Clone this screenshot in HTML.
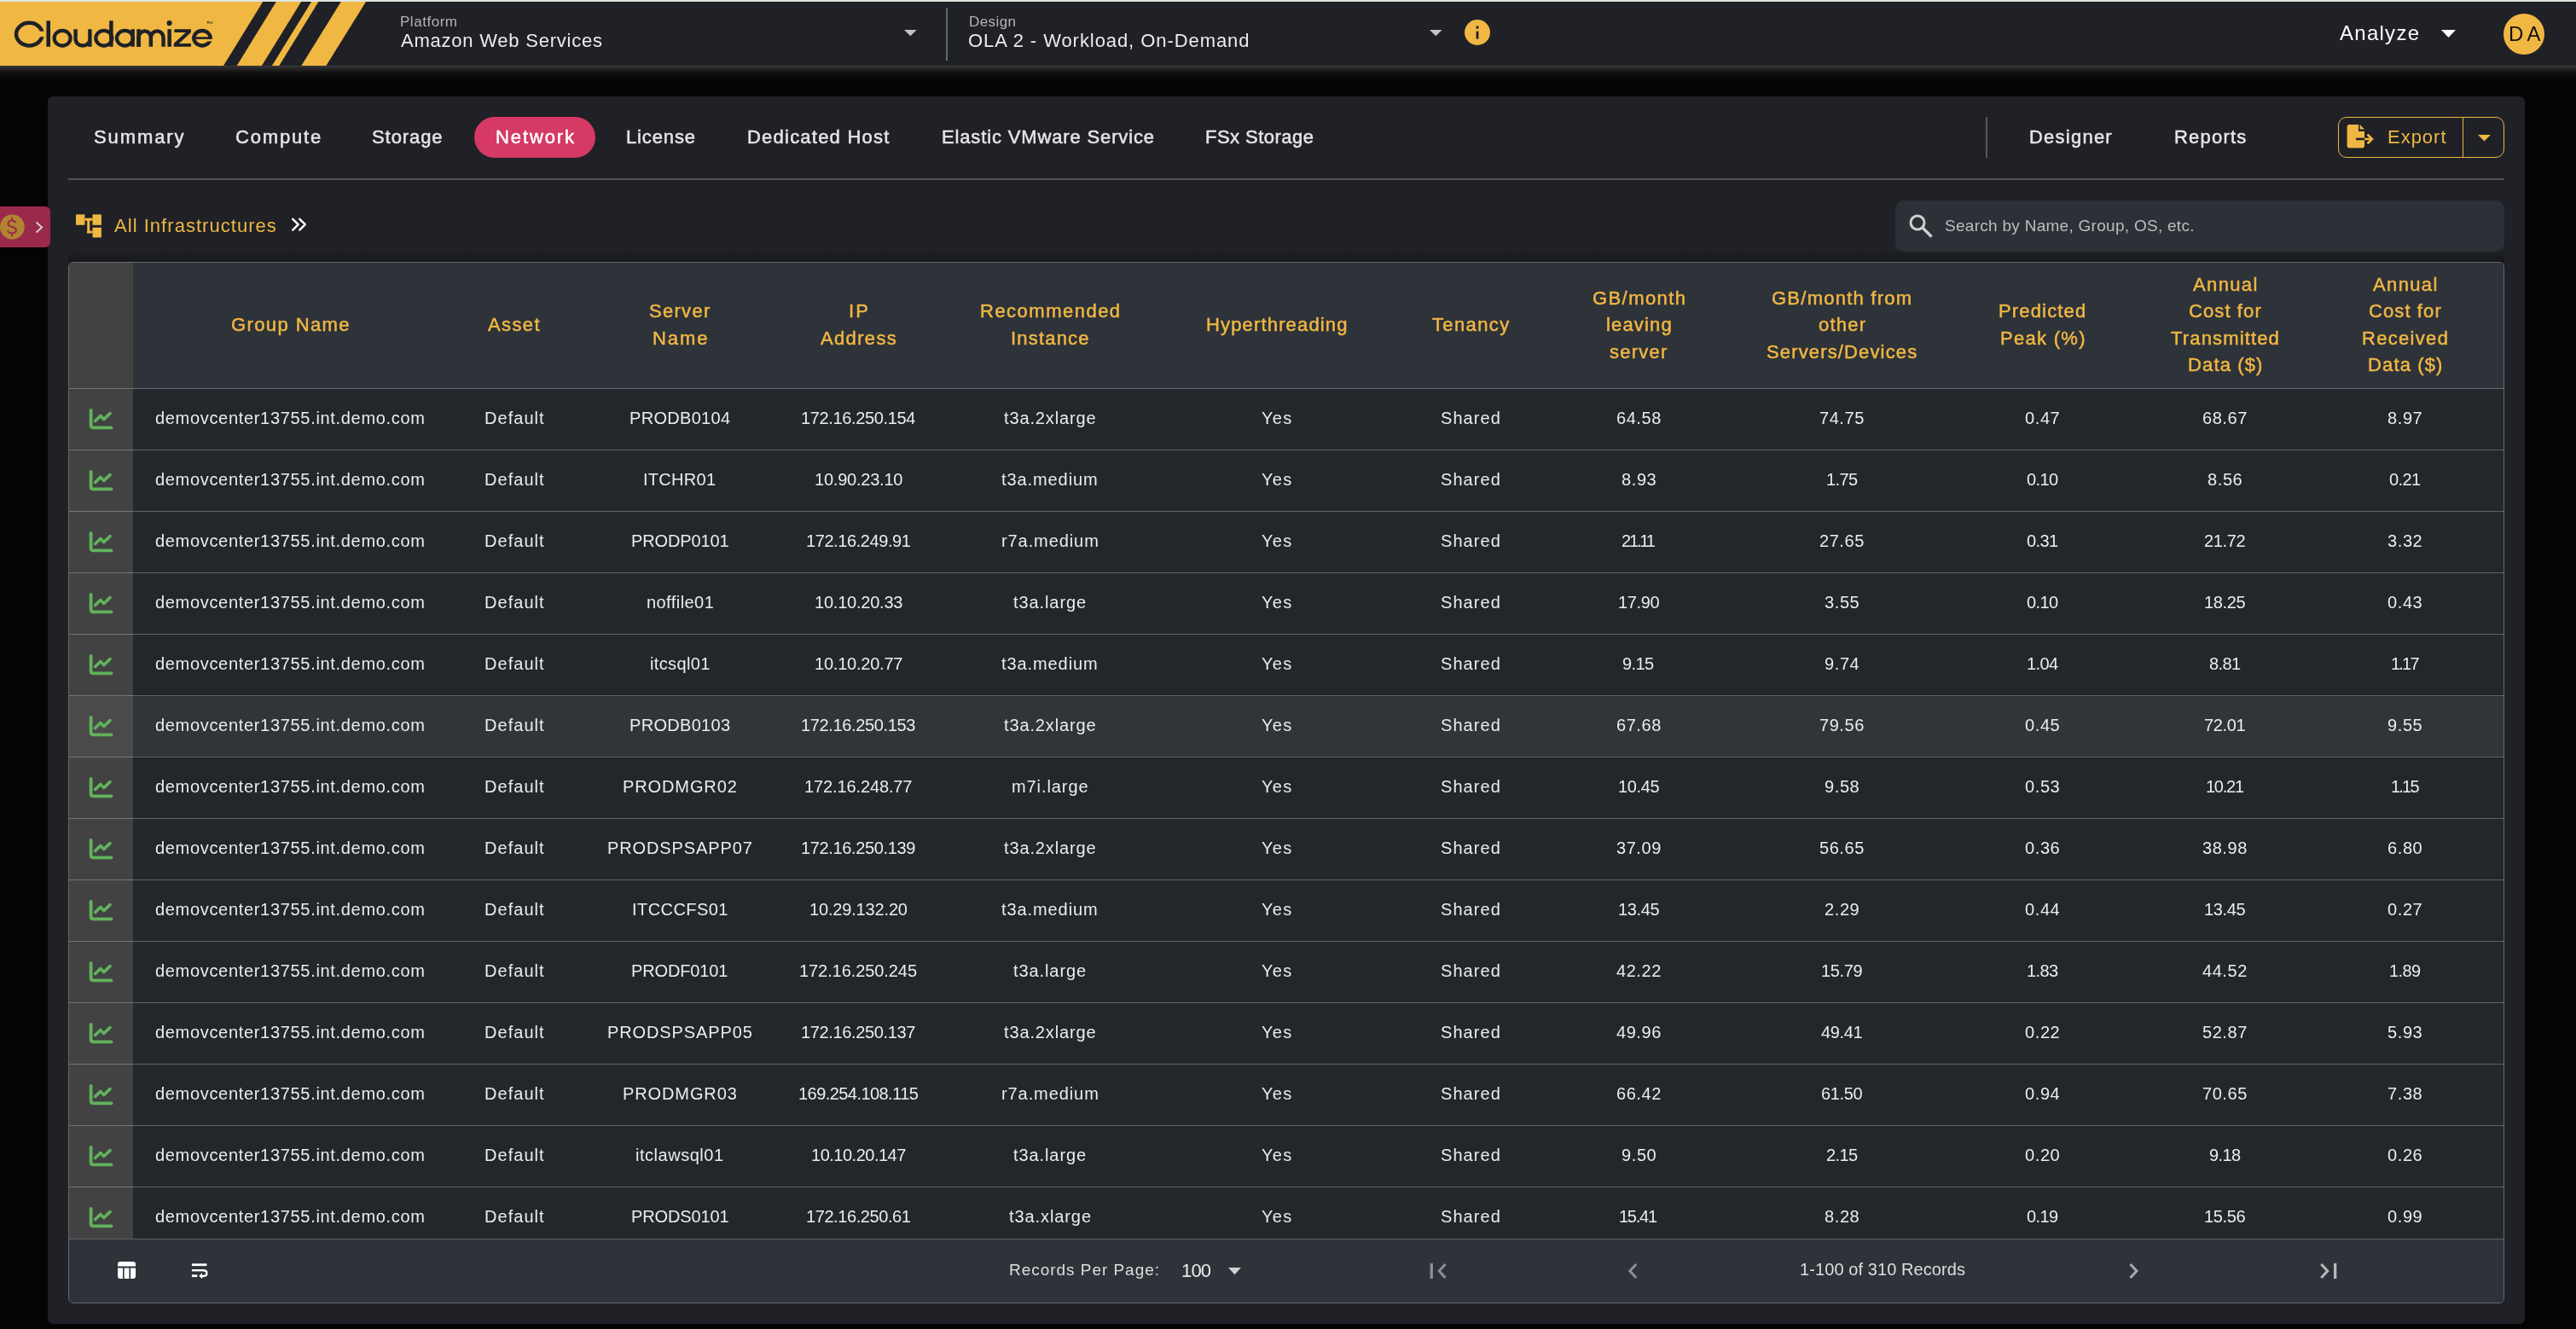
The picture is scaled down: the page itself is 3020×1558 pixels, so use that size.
<!DOCTYPE html>
<html><head><meta charset="utf-8"><title>Cloudamize - Network</title>
<style>
html,body{margin:0;padding:0;}
body{width:3020px;height:1558px;overflow:hidden;background:#040404;position:relative;font-family:"Liberation Sans",sans-serif;}
.t{position:absolute;white-space:nowrap;will-change:transform;}
.r{position:absolute;}
svg{position:absolute;overflow:visible;}
</style></head><body>

<div class="r" style="left:0;top:0;width:3020px;height:2px;background:#e0e4de"></div>
<div class="r" style="left:0;top:2px;width:3020px;height:75px;background:#1f2126"></div>
<div class="r" style="left:0;top:77px;width:3020px;height:16px;background:linear-gradient(#3c3c3c,#2a2a2a 15%,#111 50%,#060606 100%)"></div>
<div class="r" style="left:0;top:93px;width:3020px;height:20px;background:#040404"></div>
<svg style="left:0;top:0" width="440" height="80"><g fill="#f0b743"><polygon points="0,2 308.2,2 262,77 0,77"/><polygon points="323.8,2 353.1,2 306.9,77 277.7,77"/><polygon points="365.1,2 373.4,2 327.3,77 318.9,77"/><polygon points="399.8,2 429,2 382.4,77 353.3,77"/></g></svg>
<svg style="left:0;top:0" width="260" height="70"><g fill="none" stroke="#1e2126"><ellipse cx="34.35" cy="40.1" rx="15.35" ry="13.3" stroke-width="4.5"/><ellipse cx="73.1" cy="44.75" rx="9.5" ry="8.8" stroke-width="4.2"/><path d="M88.6,34.2 V46 A8.4,7.5 0 0 0 105.4,46 V34.2 M105.4,45 V54.8" stroke-width="4.4"/><ellipse cx="121.8" cy="44.75" rx="9.5" ry="8.8" stroke-width="4.2"/><ellipse cx="146.4" cy="44.75" rx="9.5" ry="8.8" stroke-width="4.2"/><path d="M162.55,54.8 V44 A7.15,7.6 0 0 1 176.85,44 V54.8 M176.85,44 A7.35,7.6 0 0 1 191.55,44 V54.8" stroke-width="4.4"/><ellipse cx="237" cy="44.75" rx="9.75" ry="8.75" stroke-width="4.3"/></g><g fill="#f0b743"><rect x="38" y="36.7" width="16" height="6.5"/><rect x="239" y="45.8" width="12" height="2.6"/></g><g fill="#1e2126"><rect x="54.4" y="24.3" width="4.6" height="30.5"/><rect x="128.1" y="24.3" width="4.5" height="30.5"/><rect x="153.5" y="34.2" width="4.3" height="20.6"/><rect x="160.3" y="34.2" width="4.5" height="20.6"/><rect x="196.4" y="34.2" width="4.5" height="20.6"/><circle cx="198.6" cy="27.1" r="3.1"/><polygon points="204.4,34.2 223.9,34.2 223.9,37.9 209.8,51 223.9,51 223.9,54.8 203.7,54.8 203.7,51.1 217.8,37.9 204.4,37.9"/><rect x="227.5" y="43.3" width="20" height="2.6"/><path d="M242.3,25.6 H245.2 M243.75,25.6 V27.9 M245.8,27.9 V25.6 L247.3,27.2 L248.8,25.6 V27.9" stroke="#1e2126" stroke-width="0.7" fill="none"/></g></svg>
<div class="t" style="top:17px;font-size:17px;line-height:17px;font-weight:400;color:#b4b4b4;letter-spacing:0.529px;left:469.00px;">Platform</div>
<div class="t" style="top:37px;font-size:22px;line-height:22px;font-weight:400;color:#ebebeb;letter-spacing:0.770px;left:470.00px;">Amazon Web Services</div>
<svg style="left:1059.6px;top:35px" width="16" height="9"><polygon points="0,0 14.6,0 7.3,7.2" fill="#c4c4c4"/></svg>
<div class="r" style="left:1109.2px;top:9px;width:1.7px;height:62px;background:#63686a"></div>
<div class="t" style="top:17px;font-size:17px;line-height:17px;font-weight:400;color:#b4b4b4;letter-spacing:0.416px;left:1136.00px;">Design</div>
<div class="t" style="top:37px;font-size:22px;line-height:22px;font-weight:400;color:#ebebeb;letter-spacing:0.931px;left:1134.50px;">OLA 2 - Workload, On-Demand</div>
<svg style="left:1675.6px;top:35px" width="16" height="9"><polygon points="0,0 14.6,0 7.3,7.2" fill="#c4c4c4"/></svg>
<svg style="left:1716.5px;top:23px" width="30" height="30"><circle cx="15" cy="15" r="15" fill="#f0b743"/><rect x="13.6" y="7.4" width="2.8" height="3.2" fill="#1f2126"/><rect x="13.6" y="13.7" width="2.8" height="8.9" fill="#1f2126"/></svg>
<div class="t" style="top:27px;font-size:24px;line-height:24px;font-weight:400;color:#ffffff;letter-spacing:1.269px;left:2743.00px;">Analyze</div>
<svg style="left:2862px;top:34.5px" width="18" height="10"><polygon points="0,0 17,0 8.5,9" fill="#ffffff"/></svg>
<svg style="left:2935px;top:16px" width="48" height="48"><circle cx="24" cy="24" r="24" fill="#f0b743"/></svg>
<div class="t" style="top:28px;font-size:24px;line-height:24px;font-weight:400;color:#111111;letter-spacing:4.159px;left:2940.85px;">DA</div>
<div class="r" style="left:56px;top:113px;width:2904px;height:1439px;background:#1f2126;border-radius:6px"></div>
<div class="r" style="left:556px;top:137px;width:142px;height:48px;background:#d63964;border-radius:24px"></div>
<div class="t" style="top:150px;font-size:22px;line-height:22px;font-weight:400;color:#e6e6e6;-webkit-text-stroke:0.5px #e6e6e6;letter-spacing:1.895px;left:110.00px;">Summary</div>
<div class="t" style="top:150px;font-size:22px;line-height:22px;font-weight:400;color:#e6e6e6;-webkit-text-stroke:0.5px #e6e6e6;letter-spacing:1.822px;left:275.70px;">Compute</div>
<div class="t" style="top:150px;font-size:22px;line-height:22px;font-weight:400;color:#e6e6e6;-webkit-text-stroke:0.5px #e6e6e6;letter-spacing:0.924px;left:436.40px;">Storage</div>
<div class="t" style="top:150px;font-size:22px;line-height:22px;font-weight:400;color:#ffffff;-webkit-text-stroke:0.5px #ffffff;letter-spacing:1.886px;left:581.00px;">Network</div>
<div class="t" style="top:150px;font-size:22px;line-height:22px;font-weight:400;color:#e6e6e6;-webkit-text-stroke:0.5px #e6e6e6;letter-spacing:0.861px;left:734.00px;">License</div>
<div class="t" style="top:150px;font-size:22px;line-height:22px;font-weight:400;color:#e6e6e6;-webkit-text-stroke:0.5px #e6e6e6;letter-spacing:1.222px;left:875.70px;">Dedicated Host</div>
<div class="t" style="top:150px;font-size:22px;line-height:22px;font-weight:400;color:#e6e6e6;-webkit-text-stroke:0.5px #e6e6e6;letter-spacing:0.854px;left:1103.70px;">Elastic VMware Service</div>
<div class="t" style="top:150px;font-size:22px;line-height:22px;font-weight:400;color:#e6e6e6;-webkit-text-stroke:0.5px #e6e6e6;letter-spacing:0.472px;left:1413.00px;">FSx Storage</div>
<div class="r" style="left:2328px;top:137px;width:2px;height:48px;background:#55575b"></div>
<div class="t" style="top:150px;font-size:22px;line-height:22px;font-weight:400;color:#e6e6e6;-webkit-text-stroke:0.5px #e6e6e6;letter-spacing:1.236px;left:2378.80px;">Designer</div>
<div class="t" style="top:150px;font-size:22px;line-height:22px;font-weight:400;color:#e6e6e6;-webkit-text-stroke:0.5px #e6e6e6;letter-spacing:1.211px;left:2548.70px;">Reports</div>
<div class="r" style="left:2741px;top:137px;width:193px;height:46px;border:1.3px solid #f0b743;border-radius:10px"></div>
<div class="r" style="left:2887px;top:137px;width:1.3px;height:48px;background:#f0b743"></div>
<svg style="left:2751px;top:145px" width="34" height="30"><path d="M3,1 H14 V9 H21 V26 Q21,28.5 18.5,28.5 H3 Q0.6,28.5 0.6,26 V3.5 Q0.6,1 3,1 Z" fill="#f0b743"/><path d="M15.5,1 L21,6.5 H15.5 Z" fill="#f0b743"/><path d="M11,18 H30" stroke="#1f2126" stroke-width="2.6" fill="none"/><path d="M21,18 H30 M24.5,12.6 L30,18 L24.5,23.4" stroke="#f0b743" stroke-width="2.6" fill="none"/></svg>
<div class="t" style="top:150px;font-size:22px;line-height:22px;font-weight:400;color:#f0b743;letter-spacing:0.983px;left:2798.60px;">Export</div>
<svg style="left:2904.5px;top:158px" width="16" height="8"><polygon points="0,0 15,0 7.5,7.5" fill="#f0b743"/></svg>
<div class="r" style="left:80px;top:209px;width:2856px;height:2px;background:#505256"></div>
<div class="r" style="left:0;top:242px;width:59px;height:48px;background:#9b294c;border-radius:0 6px 6px 0"></div>
<svg style="left:0;top:251px" width="60" height="32"><circle cx="14.4" cy="15" r="14.4" fill="#b08433"/><path d="M18.2,9.5 Q16.5,7.6 14,7.6 Q9.6,7.6 9.6,11.3 Q9.6,14.2 14,15 Q18.8,15.8 18.8,19 Q18.8,22.4 14,22.4 Q11,22.4 9.2,20.3 M14,4.6 V7.6 M14,22.4 V25.4" stroke="#9b294c" stroke-width="2" fill="none" stroke-linecap="round"/><path d="M42.5,9.5 L49,15.5 L42.5,21.5" stroke="#cfcfcf" stroke-width="2" fill="none"/></svg>
<svg style="left:89px;top:251px" width="32" height="30"><g fill="#f0b743"><rect x="0" y="0.4" width="10.4" height="12.4"/><rect x="19.5" y="0.4" width="10.4" height="12.4"/><rect x="19.5" y="15.8" width="10.4" height="11.6"/><rect x="10.4" y="4.7" width="9.1" height="3"/><rect x="13.2" y="7" width="3" height="15.4"/><rect x="13.2" y="19.6" width="6.3" height="2.8"/></g></svg>
<div class="t" style="top:254px;font-size:22px;line-height:22px;font-weight:400;color:#f0b743;letter-spacing:1.035px;left:134.00px;">All Infrastructures</div>
<svg style="left:340px;top:254px" width="22" height="20"><path d="M3.2,2.8 L9.7,9.2 L3.2,15.6 M11.3,2.8 L17.8,9.2 L11.3,15.6" stroke="#fff" stroke-width="2.4" fill="none" stroke-linecap="round" stroke-linejoin="round"/></svg>
<div class="r" style="left:2222px;top:235px;width:2714px;height:60px;background:#2d3037;border-radius:10px;width:714px"></div>
<svg style="left:2237px;top:249.5px" width="32" height="32"><circle cx="11" cy="11" r="8" stroke="#cfcfcf" stroke-width="3" fill="none"/><path d="M17,17 L27.5,27.5" stroke="#cfcfcf" stroke-width="3.4"/></svg>
<div class="t" style="top:255px;font-size:19px;line-height:19px;font-weight:400;color:#bdbdbd;letter-spacing:0.281px;left:2279.50px;">Search by Name, Group, OS, etc.</div>
<div class="r" style="left:80px;top:293px;width:2856px;height:14px;background:linear-gradient(rgba(0,0,0,0),rgba(0,0,0,0.28))"></div>
<div class="r" style="left:80px;top:307px;width:2856px;height:1221px;background:#23262b;border-radius:6px;overflow:hidden;box-sizing:border-box;border:1px solid #66686c">
<div class="r" style="left:0;top:0;width:100%;height:148px;background:#2e3239"></div>
<div class="r" style="left:0;top:0;width:75px;height:1144px;background:#424242"></div>
<div class="r" style="left:0;top:508px;width:100%;height:71px;background:#313439"></div>
<div class="r" style="left:0;top:508px;width:75px;height:71px;background:#4a4a4a"></div>
<div class="r" style="left:0;top:147px;width:100%;height:1px;background:rgba(255,255,255,0.28)"></div>
<div class="r" style="left:0;top:219px;width:100%;height:1px;background:rgba(255,255,255,0.28)"></div>
<div class="r" style="left:0;top:291px;width:100%;height:1px;background:rgba(255,255,255,0.28)"></div>
<div class="r" style="left:0;top:363px;width:100%;height:1px;background:rgba(255,255,255,0.28)"></div>
<div class="r" style="left:0;top:435px;width:100%;height:1px;background:rgba(255,255,255,0.28)"></div>
<div class="r" style="left:0;top:507px;width:100%;height:1px;background:rgba(255,255,255,0.28)"></div>
<div class="r" style="left:0;top:579px;width:100%;height:1px;background:rgba(255,255,255,0.28)"></div>
<div class="r" style="left:0;top:651px;width:100%;height:1px;background:rgba(255,255,255,0.28)"></div>
<div class="r" style="left:0;top:723px;width:100%;height:1px;background:rgba(255,255,255,0.28)"></div>
<div class="r" style="left:0;top:795px;width:100%;height:1px;background:rgba(255,255,255,0.28)"></div>
<div class="r" style="left:0;top:867px;width:100%;height:1px;background:rgba(255,255,255,0.28)"></div>
<div class="r" style="left:0;top:939px;width:100%;height:1px;background:rgba(255,255,255,0.28)"></div>
<div class="r" style="left:0;top:1011px;width:100%;height:1px;background:rgba(255,255,255,0.28)"></div>
<div class="r" style="left:0;top:1083px;width:100%;height:1px;background:rgba(255,255,255,0.28)"></div>
<div class="r" style="left:0;top:1144px;width:100%;height:76px;background:#2e3239;border-top:1px solid #606166"></div>
</div>
<div class="t" style="top:370px;font-size:22px;line-height:22px;font-weight:400;color:#f0b743;-webkit-text-stroke:0.5px #f0b743;letter-spacing:1.399px;left:271.13px;">Group Name</div>
<div class="t" style="top:370px;font-size:22px;line-height:22px;font-weight:400;color:#f0b743;-webkit-text-stroke:0.5px #f0b743;letter-spacing:1.376px;left:572.34px;">Asset</div>
<div class="t" style="top:354px;font-size:22px;line-height:22px;font-weight:400;color:#f0b743;-webkit-text-stroke:0.5px #f0b743;letter-spacing:1.296px;left:761.36px;">Server</div>
<div class="t" style="top:386px;font-size:22px;line-height:22px;font-weight:400;color:#f0b743;-webkit-text-stroke:0.5px #f0b743;letter-spacing:1.956px;left:764.72px;">Name</div>
<div class="t" style="top:354px;font-size:22px;line-height:22px;font-weight:400;color:#f0b743;-webkit-text-stroke:0.5px #f0b743;letter-spacing:2.079px;left:995.07px;">IP</div>
<div class="t" style="top:386px;font-size:22px;line-height:22px;font-weight:400;color:#f0b743;-webkit-text-stroke:0.5px #f0b743;letter-spacing:1.345px;left:962.11px;">Address</div>
<div class="t" style="top:354px;font-size:22px;line-height:22px;font-weight:400;color:#f0b743;-webkit-text-stroke:0.5px #f0b743;letter-spacing:1.492px;left:1148.74px;">Recommended</div>
<div class="t" style="top:386px;font-size:22px;line-height:22px;font-weight:400;color:#f0b743;-webkit-text-stroke:0.5px #f0b743;letter-spacing:1.188px;left:1185.06px;">Instance</div>
<div class="t" style="top:370px;font-size:22px;line-height:22px;font-weight:400;color:#f0b743;-webkit-text-stroke:0.5px #f0b743;letter-spacing:1.157px;left:1414.26px;">Hyperthreading</div>
<div class="t" style="top:370px;font-size:22px;line-height:22px;font-weight:400;color:#f0b743;-webkit-text-stroke:0.5px #f0b743;letter-spacing:1.366px;left:1679.33px;">Tenancy</div>
<div class="t" style="top:339px;font-size:22px;line-height:22px;font-weight:400;color:#f0b743;-webkit-text-stroke:0.5px #f0b743;letter-spacing:1.415px;left:1866.53px;">GB/month</div>
<div class="t" style="top:370px;font-size:22px;line-height:22px;font-weight:400;color:#f0b743;-webkit-text-stroke:0.5px #f0b743;letter-spacing:1.162px;left:1882.65px;">leaving</div>
<div class="t" style="top:402px;font-size:22px;line-height:22px;font-weight:400;color:#f0b743;-webkit-text-stroke:0.5px #f0b743;letter-spacing:1.223px;left:1887.38px;">server</div>
<div class="t" style="top:339px;font-size:22px;line-height:22px;font-weight:400;color:#f0b743;-webkit-text-stroke:0.5px #f0b743;letter-spacing:1.243px;left:2077.36px;">GB/month from</div>
<div class="t" style="top:370px;font-size:22px;line-height:22px;font-weight:400;color:#f0b743;-webkit-text-stroke:0.5px #f0b743;letter-spacing:1.254px;left:2131.82px;">other</div>
<div class="t" style="top:402px;font-size:22px;line-height:22px;font-weight:400;color:#f0b743;-webkit-text-stroke:0.5px #f0b743;letter-spacing:1.144px;left:2071.31px;">Servers/Devices</div>
<div class="t" style="top:354px;font-size:22px;line-height:22px;font-weight:400;color:#f0b743;-webkit-text-stroke:0.5px #f0b743;letter-spacing:1.162px;left:2343.18px;">Predicted</div>
<div class="t" style="top:386px;font-size:22px;line-height:22px;font-weight:400;color:#f0b743;-webkit-text-stroke:0.5px #f0b743;letter-spacing:1.292px;left:2344.54px;">Peak (%)</div>
<div class="t" style="top:323px;font-size:22px;line-height:22px;font-weight:400;color:#f0b743;-webkit-text-stroke:0.5px #f0b743;letter-spacing:1.370px;left:2570.82px;">Annual</div>
<div class="t" style="top:354px;font-size:22px;line-height:22px;font-weight:400;color:#f0b743;-webkit-text-stroke:0.5px #f0b743;letter-spacing:1.100px;left:2566.14px;">Cost for</div>
<div class="t" style="top:386px;font-size:22px;line-height:22px;font-weight:400;color:#f0b743;-webkit-text-stroke:0.5px #f0b743;letter-spacing:1.153px;left:2545.07px;">Transmitted</div>
<div class="t" style="top:417px;font-size:22px;line-height:22px;font-weight:400;color:#f0b743;-webkit-text-stroke:0.5px #f0b743;letter-spacing:1.135px;left:2564.79px;">Data ($)</div>
<div class="t" style="top:323px;font-size:22px;line-height:22px;font-weight:400;color:#f0b743;-webkit-text-stroke:0.5px #f0b743;letter-spacing:1.370px;left:2781.82px;">Annual</div>
<div class="t" style="top:354px;font-size:22px;line-height:22px;font-weight:400;color:#f0b743;-webkit-text-stroke:0.5px #f0b743;letter-spacing:1.100px;left:2777.14px;">Cost for</div>
<div class="t" style="top:386px;font-size:22px;line-height:22px;font-weight:400;color:#f0b743;-webkit-text-stroke:0.5px #f0b743;letter-spacing:1.310px;left:2769.05px;">Received</div>
<div class="t" style="top:417px;font-size:22px;line-height:22px;font-weight:400;color:#f0b743;-webkit-text-stroke:0.5px #f0b743;letter-spacing:1.135px;left:2775.79px;">Data ($)</div>
<svg style="left:104px;top:479.4px" width="30" height="26"><path d="M2.6,2 V19.5 Q2.6,22.4 5.5,22.4 H26.5" stroke="#62b25c" stroke-width="3.8" fill="none" stroke-linecap="round"/><path d="M7.6,14.6 L13.8,8.4 L17.8,12.5 L25,5.6" stroke="#62b25c" stroke-width="3.6" fill="none" stroke-linecap="round" stroke-linejoin="round"/></svg>
<div class="t" style="top:480px;font-size:20px;line-height:20px;font-weight:400;color:#ececec;letter-spacing:0.682px;left:182.43px;">demovcenter13755.int.demo.com</div>
<div class="t" style="top:480px;font-size:20px;line-height:20px;font-weight:400;color:#ececec;letter-spacing:1.050px;left:567.76px;">Default</div>
<div class="t" style="top:480px;font-size:20px;line-height:20px;font-weight:400;color:#ececec;letter-spacing:0.312px;left:737.94px;">PRODB0104</div>
<div class="t" style="top:480px;font-size:20px;line-height:20px;font-weight:400;color:#ececec;letter-spacing:-0.354px;left:939.29px;">172.16.250.154</div>
<div class="t" style="top:480px;font-size:20px;line-height:20px;font-weight:400;color:#ececec;letter-spacing:0.860px;left:1177.02px;">t3a.2xlarge</div>
<div class="t" style="top:480px;font-size:20px;line-height:20px;font-weight:400;color:#ececec;letter-spacing:1.350px;left:1479.34px;">Yes</div>
<div class="t" style="top:480px;font-size:20px;line-height:20px;font-weight:400;color:#ececec;letter-spacing:1.080px;left:1689.45px;">Shared</div>
<div class="t" style="top:480px;font-size:20px;line-height:20px;font-weight:400;color:#ececec;letter-spacing:0.550px;left:1894.88px;">64.58</div>
<div class="t" style="top:480px;font-size:20px;line-height:20px;font-weight:400;color:#ececec;letter-spacing:0.550px;left:2133.28px;">74.75</div>
<div class="t" style="top:480px;font-size:20px;line-height:20px;font-weight:400;color:#ececec;letter-spacing:0.600px;left:2373.94px;">0.47</div>
<div class="t" style="top:480px;font-size:20px;line-height:20px;font-weight:400;color:#ececec;letter-spacing:0.550px;left:2582.38px;">68.67</div>
<div class="t" style="top:480px;font-size:20px;line-height:20px;font-weight:400;color:#ececec;letter-spacing:0.600px;left:2799.14px;">8.97</div>
<svg style="left:104px;top:551.4px" width="30" height="26"><path d="M2.6,2 V19.5 Q2.6,22.4 5.5,22.4 H26.5" stroke="#62b25c" stroke-width="3.8" fill="none" stroke-linecap="round"/><path d="M7.6,14.6 L13.8,8.4 L17.8,12.5 L25,5.6" stroke="#62b25c" stroke-width="3.6" fill="none" stroke-linecap="round" stroke-linejoin="round"/></svg>
<div class="t" style="top:552px;font-size:20px;line-height:20px;font-weight:400;color:#ececec;letter-spacing:0.682px;left:182.43px;">demovcenter13755.int.demo.com</div>
<div class="t" style="top:552px;font-size:20px;line-height:20px;font-weight:400;color:#ececec;letter-spacing:1.050px;left:567.76px;">Default</div>
<div class="t" style="top:552px;font-size:20px;line-height:20px;font-weight:400;color:#ececec;letter-spacing:0.283px;left:754.47px;">ITCHR01</div>
<div class="t" style="top:552px;font-size:20px;line-height:20px;font-weight:400;color:#ececec;letter-spacing:-0.220px;left:954.77px;">10.90.23.10</div>
<div class="t" style="top:552px;font-size:20px;line-height:20px;font-weight:400;color:#ececec;letter-spacing:0.911px;left:1174.45px;">t3a.medium</div>
<div class="t" style="top:552px;font-size:20px;line-height:20px;font-weight:400;color:#ececec;letter-spacing:1.350px;left:1479.34px;">Yes</div>
<div class="t" style="top:552px;font-size:20px;line-height:20px;font-weight:400;color:#ececec;letter-spacing:1.080px;left:1689.45px;">Shared</div>
<div class="t" style="top:552px;font-size:20px;line-height:20px;font-weight:400;color:#ececec;letter-spacing:0.600px;left:1900.64px;">8.93</div>
<div class="t" style="top:552px;font-size:20px;line-height:20px;font-weight:400;color:#ececec;letter-spacing:-0.600px;left:2140.84px;">1.75</div>
<div class="t" style="top:552px;font-size:20px;line-height:20px;font-weight:400;color:#ececec;letter-spacing:-0.600px;left:2375.74px;">0.10</div>
<div class="t" style="top:552px;font-size:20px;line-height:20px;font-weight:400;color:#ececec;letter-spacing:0.600px;left:2588.14px;">8.56</div>
<div class="t" style="top:552px;font-size:20px;line-height:20px;font-weight:400;color:#ececec;letter-spacing:-0.600px;left:2800.94px;">0.21</div>
<svg style="left:104px;top:623.4px" width="30" height="26"><path d="M2.6,2 V19.5 Q2.6,22.4 5.5,22.4 H26.5" stroke="#62b25c" stroke-width="3.8" fill="none" stroke-linecap="round"/><path d="M7.6,14.6 L13.8,8.4 L17.8,12.5 L25,5.6" stroke="#62b25c" stroke-width="3.6" fill="none" stroke-linecap="round" stroke-linejoin="round"/></svg>
<div class="t" style="top:624px;font-size:20px;line-height:20px;font-weight:400;color:#ececec;letter-spacing:0.682px;left:182.43px;">demovcenter13755.int.demo.com</div>
<div class="t" style="top:624px;font-size:20px;line-height:20px;font-weight:400;color:#ececec;letter-spacing:1.050px;left:567.76px;">Default</div>
<div class="t" style="top:624px;font-size:20px;line-height:20px;font-weight:400;color:#ececec;letter-spacing:-0.137px;left:739.74px;">PRODP0101</div>
<div class="t" style="top:624px;font-size:20px;line-height:20px;font-weight:400;color:#ececec;letter-spacing:-0.417px;left:945.05px;">172.16.249.91</div>
<div class="t" style="top:624px;font-size:20px;line-height:20px;font-weight:400;color:#ececec;letter-spacing:0.911px;left:1173.90px;">r7a.medium</div>
<div class="t" style="top:624px;font-size:20px;line-height:20px;font-weight:400;color:#ececec;letter-spacing:1.350px;left:1479.34px;">Yes</div>
<div class="t" style="top:624px;font-size:20px;line-height:20px;font-weight:400;color:#ececec;letter-spacing:1.080px;left:1689.45px;">Shared</div>
<div class="t" style="top:624px;font-size:20px;line-height:20px;font-weight:400;color:#ececec;letter-spacing:-2.150px;left:1901.02px;">21.11</div>
<div class="t" style="top:624px;font-size:20px;line-height:20px;font-weight:400;color:#ececec;letter-spacing:0.550px;left:2133.28px;">27.65</div>
<div class="t" style="top:624px;font-size:20px;line-height:20px;font-weight:400;color:#ececec;letter-spacing:-0.600px;left:2375.74px;">0.31</div>
<div class="t" style="top:624px;font-size:20px;line-height:20px;font-weight:400;color:#ececec;letter-spacing:-0.350px;left:2584.18px;">21.72</div>
<div class="t" style="top:624px;font-size:20px;line-height:20px;font-weight:400;color:#ececec;letter-spacing:0.600px;left:2799.14px;">3.32</div>
<svg style="left:104px;top:695.4px" width="30" height="26"><path d="M2.6,2 V19.5 Q2.6,22.4 5.5,22.4 H26.5" stroke="#62b25c" stroke-width="3.8" fill="none" stroke-linecap="round"/><path d="M7.6,14.6 L13.8,8.4 L17.8,12.5 L25,5.6" stroke="#62b25c" stroke-width="3.6" fill="none" stroke-linecap="round" stroke-linejoin="round"/></svg>
<div class="t" style="top:696px;font-size:20px;line-height:20px;font-weight:400;color:#ececec;letter-spacing:0.682px;left:182.43px;">demovcenter13755.int.demo.com</div>
<div class="t" style="top:696px;font-size:20px;line-height:20px;font-weight:400;color:#ececec;letter-spacing:1.050px;left:567.76px;">Default</div>
<div class="t" style="top:696px;font-size:20px;line-height:20px;font-weight:400;color:#ececec;letter-spacing:0.438px;left:757.62px;">noffile01</div>
<div class="t" style="top:696px;font-size:20px;line-height:20px;font-weight:400;color:#ececec;letter-spacing:-0.220px;left:954.77px;">10.10.20.33</div>
<div class="t" style="top:696px;font-size:20px;line-height:20px;font-weight:400;color:#ececec;letter-spacing:0.912px;left:1188.23px;">t3a.large</div>
<div class="t" style="top:696px;font-size:20px;line-height:20px;font-weight:400;color:#ececec;letter-spacing:1.350px;left:1479.34px;">Yes</div>
<div class="t" style="top:696px;font-size:20px;line-height:20px;font-weight:400;color:#ececec;letter-spacing:1.080px;left:1689.45px;">Shared</div>
<div class="t" style="top:696px;font-size:20px;line-height:20px;font-weight:400;color:#ececec;letter-spacing:-0.350px;left:1896.67px;">17.90</div>
<div class="t" style="top:696px;font-size:20px;line-height:20px;font-weight:400;color:#ececec;letter-spacing:0.600px;left:2139.04px;">3.55</div>
<div class="t" style="top:696px;font-size:20px;line-height:20px;font-weight:400;color:#ececec;letter-spacing:-0.600px;left:2375.74px;">0.10</div>
<div class="t" style="top:696px;font-size:20px;line-height:20px;font-weight:400;color:#ececec;letter-spacing:-0.350px;left:2584.18px;">18.25</div>
<div class="t" style="top:696px;font-size:20px;line-height:20px;font-weight:400;color:#ececec;letter-spacing:0.600px;left:2799.14px;">0.43</div>
<svg style="left:104px;top:767.4px" width="30" height="26"><path d="M2.6,2 V19.5 Q2.6,22.4 5.5,22.4 H26.5" stroke="#62b25c" stroke-width="3.8" fill="none" stroke-linecap="round"/><path d="M7.6,14.6 L13.8,8.4 L17.8,12.5 L25,5.6" stroke="#62b25c" stroke-width="3.6" fill="none" stroke-linecap="round" stroke-linejoin="round"/></svg>
<div class="t" style="top:768px;font-size:20px;line-height:20px;font-weight:400;color:#ececec;letter-spacing:0.682px;left:182.43px;">demovcenter13755.int.demo.com</div>
<div class="t" style="top:768px;font-size:20px;line-height:20px;font-weight:400;color:#ececec;letter-spacing:1.050px;left:567.76px;">Default</div>
<div class="t" style="top:768px;font-size:20px;line-height:20px;font-weight:400;color:#ececec;letter-spacing:0.371px;left:761.79px;">itcsql01</div>
<div class="t" style="top:768px;font-size:20px;line-height:20px;font-weight:400;color:#ececec;letter-spacing:-0.220px;left:954.77px;">10.10.20.77</div>
<div class="t" style="top:768px;font-size:20px;line-height:20px;font-weight:400;color:#ececec;letter-spacing:0.911px;left:1174.45px;">t3a.medium</div>
<div class="t" style="top:768px;font-size:20px;line-height:20px;font-weight:400;color:#ececec;letter-spacing:1.350px;left:1479.34px;">Yes</div>
<div class="t" style="top:768px;font-size:20px;line-height:20px;font-weight:400;color:#ececec;letter-spacing:1.080px;left:1689.45px;">Shared</div>
<div class="t" style="top:768px;font-size:20px;line-height:20px;font-weight:400;color:#ececec;letter-spacing:-0.600px;left:1902.44px;">9.15</div>
<div class="t" style="top:768px;font-size:20px;line-height:20px;font-weight:400;color:#ececec;letter-spacing:0.600px;left:2139.04px;">9.74</div>
<div class="t" style="top:768px;font-size:20px;line-height:20px;font-weight:400;color:#ececec;letter-spacing:-0.600px;left:2375.74px;">1.04</div>
<div class="t" style="top:768px;font-size:20px;line-height:20px;font-weight:400;color:#ececec;letter-spacing:-0.600px;left:2589.94px;">8.81</div>
<div class="t" style="top:768px;font-size:20px;line-height:20px;font-weight:400;color:#ececec;letter-spacing:-1.800px;left:2802.74px;">1.17</div>
<svg style="left:104px;top:839.4px" width="30" height="26"><path d="M2.6,2 V19.5 Q2.6,22.4 5.5,22.4 H26.5" stroke="#62b25c" stroke-width="3.8" fill="none" stroke-linecap="round"/><path d="M7.6,14.6 L13.8,8.4 L17.8,12.5 L25,5.6" stroke="#62b25c" stroke-width="3.6" fill="none" stroke-linecap="round" stroke-linejoin="round"/></svg>
<div class="t" style="top:840px;font-size:20px;line-height:20px;font-weight:400;color:#ececec;letter-spacing:0.682px;left:182.43px;">demovcenter13755.int.demo.com</div>
<div class="t" style="top:840px;font-size:20px;line-height:20px;font-weight:400;color:#ececec;letter-spacing:1.050px;left:567.76px;">Default</div>
<div class="t" style="top:840px;font-size:20px;line-height:20px;font-weight:400;color:#ececec;letter-spacing:0.312px;left:737.94px;">PRODB0103</div>
<div class="t" style="top:840px;font-size:20px;line-height:20px;font-weight:400;color:#ececec;letter-spacing:-0.354px;left:939.29px;">172.16.250.153</div>
<div class="t" style="top:840px;font-size:20px;line-height:20px;font-weight:400;color:#ececec;letter-spacing:0.860px;left:1177.02px;">t3a.2xlarge</div>
<div class="t" style="top:840px;font-size:20px;line-height:20px;font-weight:400;color:#ececec;letter-spacing:1.350px;left:1479.34px;">Yes</div>
<div class="t" style="top:840px;font-size:20px;line-height:20px;font-weight:400;color:#ececec;letter-spacing:1.080px;left:1689.45px;">Shared</div>
<div class="t" style="top:840px;font-size:20px;line-height:20px;font-weight:400;color:#ececec;letter-spacing:0.550px;left:1894.88px;">67.68</div>
<div class="t" style="top:840px;font-size:20px;line-height:20px;font-weight:400;color:#ececec;letter-spacing:0.550px;left:2133.28px;">79.56</div>
<div class="t" style="top:840px;font-size:20px;line-height:20px;font-weight:400;color:#ececec;letter-spacing:0.600px;left:2373.94px;">0.45</div>
<div class="t" style="top:840px;font-size:20px;line-height:20px;font-weight:400;color:#ececec;letter-spacing:-0.350px;left:2584.18px;">72.01</div>
<div class="t" style="top:840px;font-size:20px;line-height:20px;font-weight:400;color:#ececec;letter-spacing:0.600px;left:2799.14px;">9.55</div>
<svg style="left:104px;top:911.4px" width="30" height="26"><path d="M2.6,2 V19.5 Q2.6,22.4 5.5,22.4 H26.5" stroke="#62b25c" stroke-width="3.8" fill="none" stroke-linecap="round"/><path d="M7.6,14.6 L13.8,8.4 L17.8,12.5 L25,5.6" stroke="#62b25c" stroke-width="3.6" fill="none" stroke-linecap="round" stroke-linejoin="round"/></svg>
<div class="t" style="top:912px;font-size:20px;line-height:20px;font-weight:400;color:#ececec;letter-spacing:0.682px;left:182.43px;">demovcenter13755.int.demo.com</div>
<div class="t" style="top:912px;font-size:20px;line-height:20px;font-weight:400;color:#ececec;letter-spacing:1.050px;left:567.76px;">Default</div>
<div class="t" style="top:912px;font-size:20px;line-height:20px;font-weight:400;color:#ececec;letter-spacing:0.888px;left:730.10px;">PRODMGR02</div>
<div class="t" style="top:912px;font-size:20px;line-height:20px;font-weight:400;color:#ececec;letter-spacing:-0.117px;left:943.25px;">172.16.248.77</div>
<div class="t" style="top:912px;font-size:20px;line-height:20px;font-weight:400;color:#ececec;letter-spacing:0.912px;left:1186.02px;">m7i.large</div>
<div class="t" style="top:912px;font-size:20px;line-height:20px;font-weight:400;color:#ececec;letter-spacing:1.350px;left:1479.34px;">Yes</div>
<div class="t" style="top:912px;font-size:20px;line-height:20px;font-weight:400;color:#ececec;letter-spacing:1.080px;left:1689.45px;">Shared</div>
<div class="t" style="top:912px;font-size:20px;line-height:20px;font-weight:400;color:#ececec;letter-spacing:-0.350px;left:1896.67px;">10.45</div>
<div class="t" style="top:912px;font-size:20px;line-height:20px;font-weight:400;color:#ececec;letter-spacing:0.600px;left:2139.04px;">9.58</div>
<div class="t" style="top:912px;font-size:20px;line-height:20px;font-weight:400;color:#ececec;letter-spacing:0.600px;left:2373.94px;">0.53</div>
<div class="t" style="top:912px;font-size:20px;line-height:20px;font-weight:400;color:#ececec;letter-spacing:-1.250px;left:2585.97px;">10.21</div>
<div class="t" style="top:912px;font-size:20px;line-height:20px;font-weight:400;color:#ececec;letter-spacing:-1.800px;left:2802.74px;">1.15</div>
<svg style="left:104px;top:983.4px" width="30" height="26"><path d="M2.6,2 V19.5 Q2.6,22.4 5.5,22.4 H26.5" stroke="#62b25c" stroke-width="3.8" fill="none" stroke-linecap="round"/><path d="M7.6,14.6 L13.8,8.4 L17.8,12.5 L25,5.6" stroke="#62b25c" stroke-width="3.6" fill="none" stroke-linecap="round" stroke-linejoin="round"/></svg>
<div class="t" style="top:984px;font-size:20px;line-height:20px;font-weight:400;color:#ececec;letter-spacing:0.682px;left:182.43px;">demovcenter13755.int.demo.com</div>
<div class="t" style="top:984px;font-size:20px;line-height:20px;font-weight:400;color:#ececec;letter-spacing:1.050px;left:567.76px;">Default</div>
<div class="t" style="top:984px;font-size:20px;line-height:20px;font-weight:400;color:#ececec;letter-spacing:0.891px;left:712.06px;">PRODSPSAPP07</div>
<div class="t" style="top:984px;font-size:20px;line-height:20px;font-weight:400;color:#ececec;letter-spacing:-0.354px;left:939.29px;">172.16.250.139</div>
<div class="t" style="top:984px;font-size:20px;line-height:20px;font-weight:400;color:#ececec;letter-spacing:0.860px;left:1177.02px;">t3a.2xlarge</div>
<div class="t" style="top:984px;font-size:20px;line-height:20px;font-weight:400;color:#ececec;letter-spacing:1.350px;left:1479.34px;">Yes</div>
<div class="t" style="top:984px;font-size:20px;line-height:20px;font-weight:400;color:#ececec;letter-spacing:1.080px;left:1689.45px;">Shared</div>
<div class="t" style="top:984px;font-size:20px;line-height:20px;font-weight:400;color:#ececec;letter-spacing:0.550px;left:1894.88px;">37.09</div>
<div class="t" style="top:984px;font-size:20px;line-height:20px;font-weight:400;color:#ececec;letter-spacing:0.550px;left:2133.28px;">56.65</div>
<div class="t" style="top:984px;font-size:20px;line-height:20px;font-weight:400;color:#ececec;letter-spacing:0.600px;left:2373.94px;">0.36</div>
<div class="t" style="top:984px;font-size:20px;line-height:20px;font-weight:400;color:#ececec;letter-spacing:0.550px;left:2582.38px;">38.98</div>
<div class="t" style="top:984px;font-size:20px;line-height:20px;font-weight:400;color:#ececec;letter-spacing:0.600px;left:2799.14px;">6.80</div>
<svg style="left:104px;top:1055.4px" width="30" height="26"><path d="M2.6,2 V19.5 Q2.6,22.4 5.5,22.4 H26.5" stroke="#62b25c" stroke-width="3.8" fill="none" stroke-linecap="round"/><path d="M7.6,14.6 L13.8,8.4 L17.8,12.5 L25,5.6" stroke="#62b25c" stroke-width="3.6" fill="none" stroke-linecap="round" stroke-linejoin="round"/></svg>
<div class="t" style="top:1056px;font-size:20px;line-height:20px;font-weight:400;color:#ececec;letter-spacing:0.682px;left:182.43px;">demovcenter13755.int.demo.com</div>
<div class="t" style="top:1056px;font-size:20px;line-height:20px;font-weight:400;color:#ececec;letter-spacing:1.050px;left:567.76px;">Default</div>
<div class="t" style="top:1056px;font-size:20px;line-height:20px;font-weight:400;color:#ececec;letter-spacing:0.438px;left:740.80px;">ITCCCFS01</div>
<div class="t" style="top:1056px;font-size:20px;line-height:20px;font-weight:400;color:#ececec;letter-spacing:-0.164px;left:949.01px;">10.29.132.20</div>
<div class="t" style="top:1056px;font-size:20px;line-height:20px;font-weight:400;color:#ececec;letter-spacing:0.911px;left:1174.45px;">t3a.medium</div>
<div class="t" style="top:1056px;font-size:20px;line-height:20px;font-weight:400;color:#ececec;letter-spacing:1.350px;left:1479.34px;">Yes</div>
<div class="t" style="top:1056px;font-size:20px;line-height:20px;font-weight:400;color:#ececec;letter-spacing:1.080px;left:1689.45px;">Shared</div>
<div class="t" style="top:1056px;font-size:20px;line-height:20px;font-weight:400;color:#ececec;letter-spacing:-0.350px;left:1896.67px;">13.45</div>
<div class="t" style="top:1056px;font-size:20px;line-height:20px;font-weight:400;color:#ececec;letter-spacing:0.600px;left:2139.04px;">2.29</div>
<div class="t" style="top:1056px;font-size:20px;line-height:20px;font-weight:400;color:#ececec;letter-spacing:0.600px;left:2373.94px;">0.44</div>
<div class="t" style="top:1056px;font-size:20px;line-height:20px;font-weight:400;color:#ececec;letter-spacing:-0.350px;left:2584.18px;">13.45</div>
<div class="t" style="top:1056px;font-size:20px;line-height:20px;font-weight:400;color:#ececec;letter-spacing:0.600px;left:2799.14px;">0.27</div>
<svg style="left:104px;top:1127.4px" width="30" height="26"><path d="M2.6,2 V19.5 Q2.6,22.4 5.5,22.4 H26.5" stroke="#62b25c" stroke-width="3.8" fill="none" stroke-linecap="round"/><path d="M7.6,14.6 L13.8,8.4 L17.8,12.5 L25,5.6" stroke="#62b25c" stroke-width="3.6" fill="none" stroke-linecap="round" stroke-linejoin="round"/></svg>
<div class="t" style="top:1128px;font-size:20px;line-height:20px;font-weight:400;color:#ececec;letter-spacing:0.682px;left:182.43px;">demovcenter13755.int.demo.com</div>
<div class="t" style="top:1128px;font-size:20px;line-height:20px;font-weight:400;color:#ececec;letter-spacing:1.050px;left:567.76px;">Default</div>
<div class="t" style="top:1128px;font-size:20px;line-height:20px;font-weight:400;color:#ececec;letter-spacing:-0.137px;left:740.30px;">PRODF0101</div>
<div class="t" style="top:1128px;font-size:20px;line-height:20px;font-weight:400;color:#ececec;letter-spacing:-0.077px;left:937.49px;">172.16.250.245</div>
<div class="t" style="top:1128px;font-size:20px;line-height:20px;font-weight:400;color:#ececec;letter-spacing:0.912px;left:1188.23px;">t3a.large</div>
<div class="t" style="top:1128px;font-size:20px;line-height:20px;font-weight:400;color:#ececec;letter-spacing:1.350px;left:1479.34px;">Yes</div>
<div class="t" style="top:1128px;font-size:20px;line-height:20px;font-weight:400;color:#ececec;letter-spacing:1.080px;left:1689.45px;">Shared</div>
<div class="t" style="top:1128px;font-size:20px;line-height:20px;font-weight:400;color:#ececec;letter-spacing:0.550px;left:1894.88px;">42.22</div>
<div class="t" style="top:1128px;font-size:20px;line-height:20px;font-weight:400;color:#ececec;letter-spacing:-0.350px;left:2135.08px;">15.79</div>
<div class="t" style="top:1128px;font-size:20px;line-height:20px;font-weight:400;color:#ececec;letter-spacing:-0.600px;left:2375.74px;">1.83</div>
<div class="t" style="top:1128px;font-size:20px;line-height:20px;font-weight:400;color:#ececec;letter-spacing:0.550px;left:2582.38px;">44.52</div>
<div class="t" style="top:1128px;font-size:20px;line-height:20px;font-weight:400;color:#ececec;letter-spacing:-0.600px;left:2800.94px;">1.89</div>
<svg style="left:104px;top:1199.4px" width="30" height="26"><path d="M2.6,2 V19.5 Q2.6,22.4 5.5,22.4 H26.5" stroke="#62b25c" stroke-width="3.8" fill="none" stroke-linecap="round"/><path d="M7.6,14.6 L13.8,8.4 L17.8,12.5 L25,5.6" stroke="#62b25c" stroke-width="3.6" fill="none" stroke-linecap="round" stroke-linejoin="round"/></svg>
<div class="t" style="top:1200px;font-size:20px;line-height:20px;font-weight:400;color:#ececec;letter-spacing:0.682px;left:182.43px;">demovcenter13755.int.demo.com</div>
<div class="t" style="top:1200px;font-size:20px;line-height:20px;font-weight:400;color:#ececec;letter-spacing:1.050px;left:567.76px;">Default</div>
<div class="t" style="top:1200px;font-size:20px;line-height:20px;font-weight:400;color:#ececec;letter-spacing:0.891px;left:712.06px;">PRODSPSAPP05</div>
<div class="t" style="top:1200px;font-size:20px;line-height:20px;font-weight:400;color:#ececec;letter-spacing:-0.354px;left:939.29px;">172.16.250.137</div>
<div class="t" style="top:1200px;font-size:20px;line-height:20px;font-weight:400;color:#ececec;letter-spacing:0.860px;left:1177.02px;">t3a.2xlarge</div>
<div class="t" style="top:1200px;font-size:20px;line-height:20px;font-weight:400;color:#ececec;letter-spacing:1.350px;left:1479.34px;">Yes</div>
<div class="t" style="top:1200px;font-size:20px;line-height:20px;font-weight:400;color:#ececec;letter-spacing:1.080px;left:1689.45px;">Shared</div>
<div class="t" style="top:1200px;font-size:20px;line-height:20px;font-weight:400;color:#ececec;letter-spacing:0.550px;left:1894.88px;">49.96</div>
<div class="t" style="top:1200px;font-size:20px;line-height:20px;font-weight:400;color:#ececec;letter-spacing:-0.350px;left:2135.08px;">49.41</div>
<div class="t" style="top:1200px;font-size:20px;line-height:20px;font-weight:400;color:#ececec;letter-spacing:0.600px;left:2373.94px;">0.22</div>
<div class="t" style="top:1200px;font-size:20px;line-height:20px;font-weight:400;color:#ececec;letter-spacing:0.550px;left:2582.38px;">52.87</div>
<div class="t" style="top:1200px;font-size:20px;line-height:20px;font-weight:400;color:#ececec;letter-spacing:0.600px;left:2799.14px;">5.93</div>
<svg style="left:104px;top:1271.4px" width="30" height="26"><path d="M2.6,2 V19.5 Q2.6,22.4 5.5,22.4 H26.5" stroke="#62b25c" stroke-width="3.8" fill="none" stroke-linecap="round"/><path d="M7.6,14.6 L13.8,8.4 L17.8,12.5 L25,5.6" stroke="#62b25c" stroke-width="3.6" fill="none" stroke-linecap="round" stroke-linejoin="round"/></svg>
<div class="t" style="top:1272px;font-size:20px;line-height:20px;font-weight:400;color:#ececec;letter-spacing:0.682px;left:182.43px;">demovcenter13755.int.demo.com</div>
<div class="t" style="top:1272px;font-size:20px;line-height:20px;font-weight:400;color:#ececec;letter-spacing:1.050px;left:567.76px;">Default</div>
<div class="t" style="top:1272px;font-size:20px;line-height:20px;font-weight:400;color:#ececec;letter-spacing:0.888px;left:730.10px;">PRODMGR03</div>
<div class="t" style="top:1272px;font-size:20px;line-height:20px;font-weight:400;color:#ececec;letter-spacing:-0.557px;left:936.07px;">169.254.108.115</div>
<div class="t" style="top:1272px;font-size:20px;line-height:20px;font-weight:400;color:#ececec;letter-spacing:0.911px;left:1173.90px;">r7a.medium</div>
<div class="t" style="top:1272px;font-size:20px;line-height:20px;font-weight:400;color:#ececec;letter-spacing:1.350px;left:1479.34px;">Yes</div>
<div class="t" style="top:1272px;font-size:20px;line-height:20px;font-weight:400;color:#ececec;letter-spacing:1.080px;left:1689.45px;">Shared</div>
<div class="t" style="top:1272px;font-size:20px;line-height:20px;font-weight:400;color:#ececec;letter-spacing:0.550px;left:1894.88px;">66.42</div>
<div class="t" style="top:1272px;font-size:20px;line-height:20px;font-weight:400;color:#ececec;letter-spacing:-0.350px;left:2135.08px;">61.50</div>
<div class="t" style="top:1272px;font-size:20px;line-height:20px;font-weight:400;color:#ececec;letter-spacing:0.600px;left:2373.94px;">0.94</div>
<div class="t" style="top:1272px;font-size:20px;line-height:20px;font-weight:400;color:#ececec;letter-spacing:0.550px;left:2582.38px;">70.65</div>
<div class="t" style="top:1272px;font-size:20px;line-height:20px;font-weight:400;color:#ececec;letter-spacing:0.600px;left:2799.14px;">7.38</div>
<svg style="left:104px;top:1343.4px" width="30" height="26"><path d="M2.6,2 V19.5 Q2.6,22.4 5.5,22.4 H26.5" stroke="#62b25c" stroke-width="3.8" fill="none" stroke-linecap="round"/><path d="M7.6,14.6 L13.8,8.4 L17.8,12.5 L25,5.6" stroke="#62b25c" stroke-width="3.6" fill="none" stroke-linecap="round" stroke-linejoin="round"/></svg>
<div class="t" style="top:1344px;font-size:20px;line-height:20px;font-weight:400;color:#ececec;letter-spacing:0.682px;left:182.43px;">demovcenter13755.int.demo.com</div>
<div class="t" style="top:1344px;font-size:20px;line-height:20px;font-weight:400;color:#ececec;letter-spacing:1.050px;left:567.76px;">Default</div>
<div class="t" style="top:1344px;font-size:20px;line-height:20px;font-weight:400;color:#ececec;letter-spacing:0.530px;left:745.44px;">itclawsql01</div>
<div class="t" style="top:1344px;font-size:20px;line-height:20px;font-weight:400;color:#ececec;letter-spacing:-0.491px;left:950.81px;">10.10.20.147</div>
<div class="t" style="top:1344px;font-size:20px;line-height:20px;font-weight:400;color:#ececec;letter-spacing:0.912px;left:1188.23px;">t3a.large</div>
<div class="t" style="top:1344px;font-size:20px;line-height:20px;font-weight:400;color:#ececec;letter-spacing:1.350px;left:1479.34px;">Yes</div>
<div class="t" style="top:1344px;font-size:20px;line-height:20px;font-weight:400;color:#ececec;letter-spacing:1.080px;left:1689.45px;">Shared</div>
<div class="t" style="top:1344px;font-size:20px;line-height:20px;font-weight:400;color:#ececec;letter-spacing:0.600px;left:1900.64px;">9.50</div>
<div class="t" style="top:1344px;font-size:20px;line-height:20px;font-weight:400;color:#ececec;letter-spacing:-0.600px;left:2140.84px;">2.15</div>
<div class="t" style="top:1344px;font-size:20px;line-height:20px;font-weight:400;color:#ececec;letter-spacing:0.600px;left:2373.94px;">0.20</div>
<div class="t" style="top:1344px;font-size:20px;line-height:20px;font-weight:400;color:#ececec;letter-spacing:-0.600px;left:2589.94px;">9.18</div>
<div class="t" style="top:1344px;font-size:20px;line-height:20px;font-weight:400;color:#ececec;letter-spacing:0.600px;left:2799.14px;">0.26</div>
<svg style="left:104px;top:1415.4px" width="30" height="26"><path d="M2.6,2 V19.5 Q2.6,22.4 5.5,22.4 H26.5" stroke="#62b25c" stroke-width="3.8" fill="none" stroke-linecap="round"/><path d="M7.6,14.6 L13.8,8.4 L17.8,12.5 L25,5.6" stroke="#62b25c" stroke-width="3.6" fill="none" stroke-linecap="round" stroke-linejoin="round"/></svg>
<div class="t" style="top:1416px;font-size:20px;line-height:20px;font-weight:400;color:#ececec;letter-spacing:0.682px;left:182.43px;">demovcenter13755.int.demo.com</div>
<div class="t" style="top:1416px;font-size:20px;line-height:20px;font-weight:400;color:#ececec;letter-spacing:1.050px;left:567.76px;">Default</div>
<div class="t" style="top:1416px;font-size:20px;line-height:20px;font-weight:400;color:#ececec;letter-spacing:-0.137px;left:739.74px;">PRODS0101</div>
<div class="t" style="top:1416px;font-size:20px;line-height:20px;font-weight:400;color:#ececec;letter-spacing:-0.417px;left:945.05px;">172.16.250.61</div>
<div class="t" style="top:1416px;font-size:20px;line-height:20px;font-weight:400;color:#ececec;letter-spacing:0.911px;left:1182.78px;">t3a.xlarge</div>
<div class="t" style="top:1416px;font-size:20px;line-height:20px;font-weight:400;color:#ececec;letter-spacing:1.350px;left:1479.34px;">Yes</div>
<div class="t" style="top:1416px;font-size:20px;line-height:20px;font-weight:400;color:#ececec;letter-spacing:1.080px;left:1689.45px;">Shared</div>
<div class="t" style="top:1416px;font-size:20px;line-height:20px;font-weight:400;color:#ececec;letter-spacing:-1.250px;left:1898.47px;">15.41</div>
<div class="t" style="top:1416px;font-size:20px;line-height:20px;font-weight:400;color:#ececec;letter-spacing:0.600px;left:2139.04px;">8.28</div>
<div class="t" style="top:1416px;font-size:20px;line-height:20px;font-weight:400;color:#ececec;letter-spacing:-0.600px;left:2375.74px;">0.19</div>
<div class="t" style="top:1416px;font-size:20px;line-height:20px;font-weight:400;color:#ececec;letter-spacing:-0.350px;left:2584.18px;">15.56</div>
<div class="t" style="top:1416px;font-size:20px;line-height:20px;font-weight:400;color:#ececec;letter-spacing:0.600px;left:2799.14px;">0.99</div>
<svg style="left:138px;top:1479px" width="24" height="22"><g fill="#fff"><path d="M0,5.6 V3 Q0,0 3,0 H18 Q21,0 21,3 V5.6 Z"/><path d="M0,7.5 H6 V20 H3 Q0,20 0,17 Z"/><rect x="7.6" y="7.5" width="5.8" height="12.5"/><path d="M15,7.5 H21 V17 Q21,20 18,20 H15 Z"/></g></svg>
<svg style="left:224px;top:1479px" width="24" height="22"><g fill="#fff"><rect x="0.9" y="2.3" width="17.5" height="2.8"/><rect x="0.9" y="9" width="14" height="2.4"/><rect x="0.9" y="15.3" width="6.4" height="2.8"/></g><path d="M14.5,10.2 Q18.4,10.2 18.4,13.6 Q18.4,17 14.5,17 H11.5" stroke="#fff" stroke-width="2.4" fill="none"/><path d="M9.2,16.8 L13,13.3 V20.3 Z" fill="#fff"/></svg>
<div class="t" style="top:1479px;font-size:19px;line-height:19px;font-weight:400;color:#dedede;letter-spacing:0.967px;left:1183.40px;">Records Per Page:</div>
<div class="t" style="top:1479px;font-size:22px;line-height:22px;font-weight:400;color:#ececec;letter-spacing:-0.854px;left:1385.00px;">100</div>
<svg style="left:1440px;top:1486px" width="16" height="9"><polygon points="0,0 15,0 7.5,8.3" fill="#d0d0d0"/></svg>
<svg style="left:1674px;top:1478px" width="26" height="24"><rect x="2.6" y="2.9" width="3.3" height="18.2" fill="#8c8f93"/><path d="M20.5,4 L13.2,12 L20.5,20" stroke="#8c8f93" stroke-width="3" fill="none"/></svg>
<svg style="left:1904px;top:1478px" width="20" height="24"><path d="M14.2,4 L6.8,12 L14.2,20" stroke="#8c8f93" stroke-width="3" fill="none"/></svg>
<div class="t" style="top:1478px;font-size:20px;line-height:20px;font-weight:400;color:#dedede;letter-spacing:0.087px;left:2110.00px;">1-100 of 310 Records</div>
<svg style="left:2492px;top:1478px" width="20" height="24"><path d="M5.5,4 L12.9,12 L5.5,20" stroke="#a9abae" stroke-width="3" fill="none"/></svg>
<svg style="left:2716px;top:1478px" width="26" height="24"><rect x="20" y="2.9" width="3.3" height="18.2" fill="#b5b7ba"/><path d="M5.3,4 L12.7,12 L5.3,20" stroke="#b5b7ba" stroke-width="3" fill="none"/></svg>
</body></html>
